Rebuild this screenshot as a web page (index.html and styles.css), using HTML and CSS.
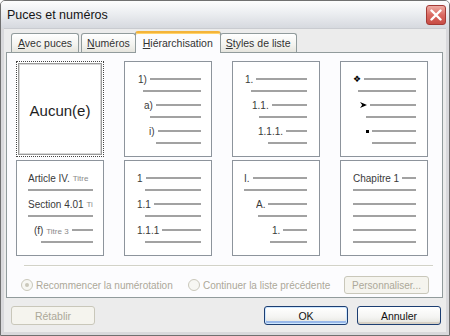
FILE: index.html
```html
<!DOCTYPE html>
<html lang="fr">
<head>
    <meta charset="UTF-8">
    <title>Puces et numéros</title>
    <link rel="stylesheet" href="styles.css">
</head>
<body>
    <div class="window">
        <div class="titlebar">
            <span class="title">Puces et numéros</span>
            <button class="close" type="button">
                <svg width="12" height="12" viewBox="0 0 12 12">
                    <path d="M1.5 1.5 L10.5 10.5 M10.5 1.5 L1.5 10.5" stroke="#fff" stroke-width="2.4" stroke-linecap="round"/>
                </svg>
            </button>
        </div>
        <div class="body">
            <div class="tabs">
                <div class="tab"><u>A</u>vec puces</div>
                <div class="tab"><u>N</u>uméros</div>
                <div class="tab active"><u>H</u>iérarchisation</div>
                <div class="tab"><u>S</u>tyles de liste</div>
            </div>
            <div class="panel">
                <div class="grille">
                    <div class="cell sel"><span class="aucun">Aucun(e)</span></div>

                    <div class="cell c-paren">
                        <div class="lv"><div class="row"><span>1)</span><i></i></div><b class="cont"></b></div>
                        <div class="lv"><div class="row"><span>a)</span><i></i></div><b class="cont"></b></div>
                        <div class="lv"><div class="row"><span>i)</span><i></i></div><b class="cont"></b></div>
                    </div>

                    <div class="cell c-dec">
                        <div class="lv"><div class="row"><span>1.</span><i></i></div><b class="cont"></b></div>
                        <div class="lv"><div class="row"><span>1.1.</span><i></i></div><b class="cont"></b></div>
                        <div class="lv"><div class="row"><span>1.1.1.</span><i></i></div><b class="cont"></b></div>
                    </div>

                    <div class="cell c-sym">
                        <div class="lv"><div class="row"><span class="sym">❖</span><i></i></div><b class="cont"></b></div>
                        <div class="lv">
                            <div class="row">
                                <svg class="fleche" width="7" height="6" viewBox="0 0 7 6">
                                    <path d="M0 0 L7 3 L0 6 L2.2 3 Z" fill="#000"/>
                                </svg>
                                <i></i>
                            </div>
                            <b class="cont"></b>
                        </div>
                        <div class="lv"><div class="row"><span class="carre"></span><i></i></div><b class="cont"></b></div>
                    </div>

                    <div class="cell c-art">
                        <div class="lv"><div class="row">Article IV.&nbsp;<small>Titre</small></div><b class="cont"></b></div>
                        <div class="lv"><div class="row">Section 4.01&nbsp;<small>Ti</small></div><b class="cont"></b></div>
                        <div class="lv"><div class="row"><span>(f)&nbsp;<small>Titre 3</small></span><i></i></div><b class="cont"></b></div>
                    </div>

                    <div class="cell c-num">
                        <div class="lv"><div class="row"><span>1</span><i></i></div><b class="cont"></b></div>
                        <div class="lv"><div class="row"><span>1.1</span><i></i></div><b class="cont"></b></div>
                        <div class="lv"><div class="row"><span>1.1.1</span><i></i></div><b class="cont"></b></div>
                    </div>

                    <div class="cell c-rom">
                        <div class="lv"><div class="row"><span>I.</span><i></i></div><b class="cont"></b></div>
                        <div class="lv"><div class="row"><span>A.</span><i></i></div><b class="cont"></b></div>
                        <div class="lv"><div class="row"><span>1.</span><i></i></div><b class="cont"></b></div>
                    </div>

                    <div class="cell c-chap">
                        <div class="lv"><div class="row"><span>Chapitre 1</span><i></i></div><b class="cont"></b></div>
                        <div class="lv"><div class="row"><i></i></div><b class="cont"></b></div>
                        <div class="lv"><div class="row"><i></i></div><b class="cont"></b></div>
                    </div>
                </div>

                <div class="sep"></div>

                <div class="options">
                    <label class="radio r1"><span class="rond coche"></span>Recommencer la numérotation</label>
                    <label class="radio r2"><span class="rond"></span>Continuer la liste précédente</label>
                    <button class="btn perso" type="button" disabled>Personnaliser...</button>
                </div>
            </div>

            <div class="footer">
                <button class="btn" type="button" disabled>Rétablir</button>
                <span class="espace"></span>
                <button class="btn actif defaut" type="button">OK</button>
                <button class="btn actif" type="button">Annuler</button>
            </div>
        </div>
    </div>
</body>
</html>
```

FILE: styles.css
```css
* {
    box-sizing: border-box;
}

body {
    margin: 0;
    font-family: "Liberation Sans", Arial, sans-serif;
    font-size: 10.5px;
    background-color: #fff;
}

.window {
    width: 450px;
    height: 336px;
    border: 1px solid #707070;
    border-radius: 5px 5px 0 0;
    background-color: #d9d9dc;
    display: flex;
    flex-direction: column;
    overflow: hidden;
}

/* barre de titre */
.titlebar {
    height: 27px;
    flex: none;
    display: flex;
    align-items: center;
    justify-content: space-between;
    padding: 0 3px 0 6px;
    background: linear-gradient(#fdfdfd, #eceef1 45%, #d6d9df);
}

.title {
    font-size: 12.5px;
    color: #151515;
}

.close {
    width: 20px;
    height: 20px;
    padding: 0;
    border: 1px solid #a33a35;
    border-radius: 3px;
    background: linear-gradient(#eeaca4, #da6a62 50%, #c84c45);
    display: flex;
    align-items: center;
    justify-content: center;
}

.body {
    flex: 1;
    margin: 0 3px 3px;
    padding: 3px 3px 0 2px;
    background-color: #ececec;
    border-top: 1px solid #c9cbd0;
}

/* onglets */
.tabs {
    height: 20px;
    display: flex;
    align-items: flex-end;
    padding-left: 5px;
}

.tab {
    height: 19px;
    padding: 3px 5px 0;
    margin-right: 2px;
    border: 1px solid #919b9c;
    border-bottom: none;
    border-radius: 3px 3px 0 0;
    background: linear-gradient(#fff, #f3f3ef 60%, #e6e5de);
    color: #333;
    white-space: nowrap;
}

.tab:first-child {
    padding: 3px 6px 0;
}

.tab.active {
    height: 22px;
    margin: 0 -1px -1px -3px;
    padding: 4px 7px 0;
    position: relative;
    z-index: 1;
    background: #fcfcfe;
    border-top: 2px solid #f4b43a;
    box-shadow: inset 0 1px 0 #ffd36b;
}

.panel {
    height: 246px;
    border: 1px solid #919b9c;
    background-color: #fcfcfe;
    display: flex;
    flex-direction: column;
}

/* grille des modèles */
.grille {
    display: grid;
    grid-template-columns: repeat(4, 88px);
    grid-template-rows: 96px 96px;
    column-gap: 20px;
    row-gap: 3px;
    padding: 8px 0 0 9px;
}

.cell {
    border: 1px solid #8d949c;
    background-color: #fff;
    padding: 11px 10px 0 0;
    display: flex;
    flex-direction: column;
    overflow: hidden;
    color: #3a3a3a;
    font-size: 10px;
}

.cell.sel {
    padding: 0;
    border: 1px dotted #444;
    box-shadow: inset 0 0 0 1px #fff, inset 0 0 0 2px #9a9a9a, inset 0 0 0 3px #d8d8d8;
    align-items: center;
    justify-content: center;
}

.aucun {
    font-size: 15px;
    color: #1e1e1e;
    margin-top: 2px;
}

.lv {
    display: flex;
    flex-direction: column;
    margin-bottom: 7px;
}

.row {
    height: 12px;
    display: flex;
    align-items: center;
    white-space: nowrap;
    overflow: hidden;
}

.row i,
.cont {
    display: block;
    height: 2px;
    background-color: #a2a2a2;
}

.row i {
    flex: 1;
    margin-left: 3px;
}

.row i:first-child {
    margin-left: 0;
}

.cont {
    margin-top: 5px;
}

.row small {
    font-size: 8px;
    color: #8a8a8a;
}

.sym {
    font-family: "DejaVu Sans", sans-serif;
    font-size: 9px;
    color: #000;
}

.fleche {
    flex: none;
}

.carre {
    width: 3px;
    height: 3px;
    background-color: #000;
}

/* décalages par niveau */
.c-paren .lv:nth-child(1) { margin-left: 13px; }
.c-paren .lv:nth-child(1) .cont { margin-left: 5px; }
.c-paren .lv:nth-child(2) { margin-left: 19px; }
.c-paren .lv:nth-child(2) .cont { margin-left: 6px; }
.c-paren .lv:nth-child(3) { margin-left: 24px; }
.c-paren .lv:nth-child(3) .cont { margin-left: 7px; }

.c-dec { padding-right: 12px; }
.c-dec .lv:nth-child(1) { margin-left: 12px; }
.c-dec .lv:nth-child(1) .cont { margin-left: 6px; }
.c-dec .lv:nth-child(2) { margin-left: 19px; }
.c-dec .lv:nth-child(2) .cont { margin-left: 7px; }
.c-dec .lv:nth-child(3) { margin-left: 25px; }
.c-dec .lv:nth-child(3) .cont { margin-left: 10px; }

.c-sym { padding-right: 11px; }
.c-sym .lv:nth-child(1) { margin-left: 12px; }
.c-sym .lv:nth-child(1) .cont { margin-left: 5px; }
.c-sym .lv:nth-child(2) { margin-left: 19px; }
.c-sym .lv:nth-child(2) .cont { margin-left: 6px; }
.c-sym .lv:nth-child(3) { margin-left: 25px; }
.c-sym .lv:nth-child(3) .cont { margin-left: 6px; }

.c-art .lv { margin-left: 11px; }
.c-art .row { font-size: 10px; }
.c-art .lv:nth-child(3) { margin-left: 17px; }
.c-art .lv:nth-child(3) .cont { margin-left: 7px; }

.c-num .lv { margin-left: 12px; }
.c-num .cont { margin-left: 8px; }

.c-rom { padding-right: 12px; }
.c-rom .lv:nth-child(1) { margin-left: 11px; }
.c-rom .lv:nth-child(2) { margin-left: 23px; }
.c-rom .lv:nth-child(2) .cont { margin-left: 2px; }
.c-rom .lv:nth-child(3) { margin-left: 39px; }
.c-rom .lv:nth-child(3) .cont { margin-left: -2px; }

.c-chap { padding-right: 11px; }
.c-chap .lv { margin-left: 12px; }

.sep {
    margin: 9px 9px 0 17px;
    height: 2px;
    border-top: 1px solid #d2d2c8;
    border-bottom: 1px solid #fff;
}

/* options */
.options {
    margin-top: 9px;
    height: 18px;
    display: flex;
    align-items: center;
    padding-left: 14px;
    color: #aca899;
    font-size: 10px;
}

.radio {
    display: flex;
    align-items: center;
    white-space: nowrap;
}

.r1 {
    width: 167px;
}

.r2 {
    width: 156px;
}

.rond {
    width: 12px;
    height: 12px;
    margin-right: 3px;
    border: 1px solid #cac8bb;
    border-radius: 50%;
    background-color: #f7f7f3;
    display: flex;
    align-items: center;
    justify-content: center;
}

.rond.coche::after {
    content: "";
    width: 4px;
    height: 4px;
    border-radius: 50%;
    background-color: #cac8bb;
}

/* boutons */
.btn {
    height: 19px;
    width: 84px;
    padding: 0;
    font-family: inherit;
    font-size: 10.5px;
    border: 1px solid #c9c7ba;
    border-radius: 3px;
    background-color: #f5f4ee;
    color: #aca899;
}

.perso {
    width: 85px;
    height: 18px;
    font-size: 10px;
}

.btn.actif {
    color: #111;
    border-color: #1c3e72;
    background: linear-gradient(#fff, #f4f4f2 60%, #e3e2dc);
    box-shadow: inset 0 -2px 0 #d6d0c5;
}

.btn.defaut {
    box-shadow: inset 0 0 0 1px #cee7ff, inset 0 -2px 0 1px #98b8ea;
}

.footer {
    display: flex;
    margin-top: 8px;
    padding: 0 2px 0 5px;
    gap: 9px;
}

.espace {
    flex: 1;
}
```
